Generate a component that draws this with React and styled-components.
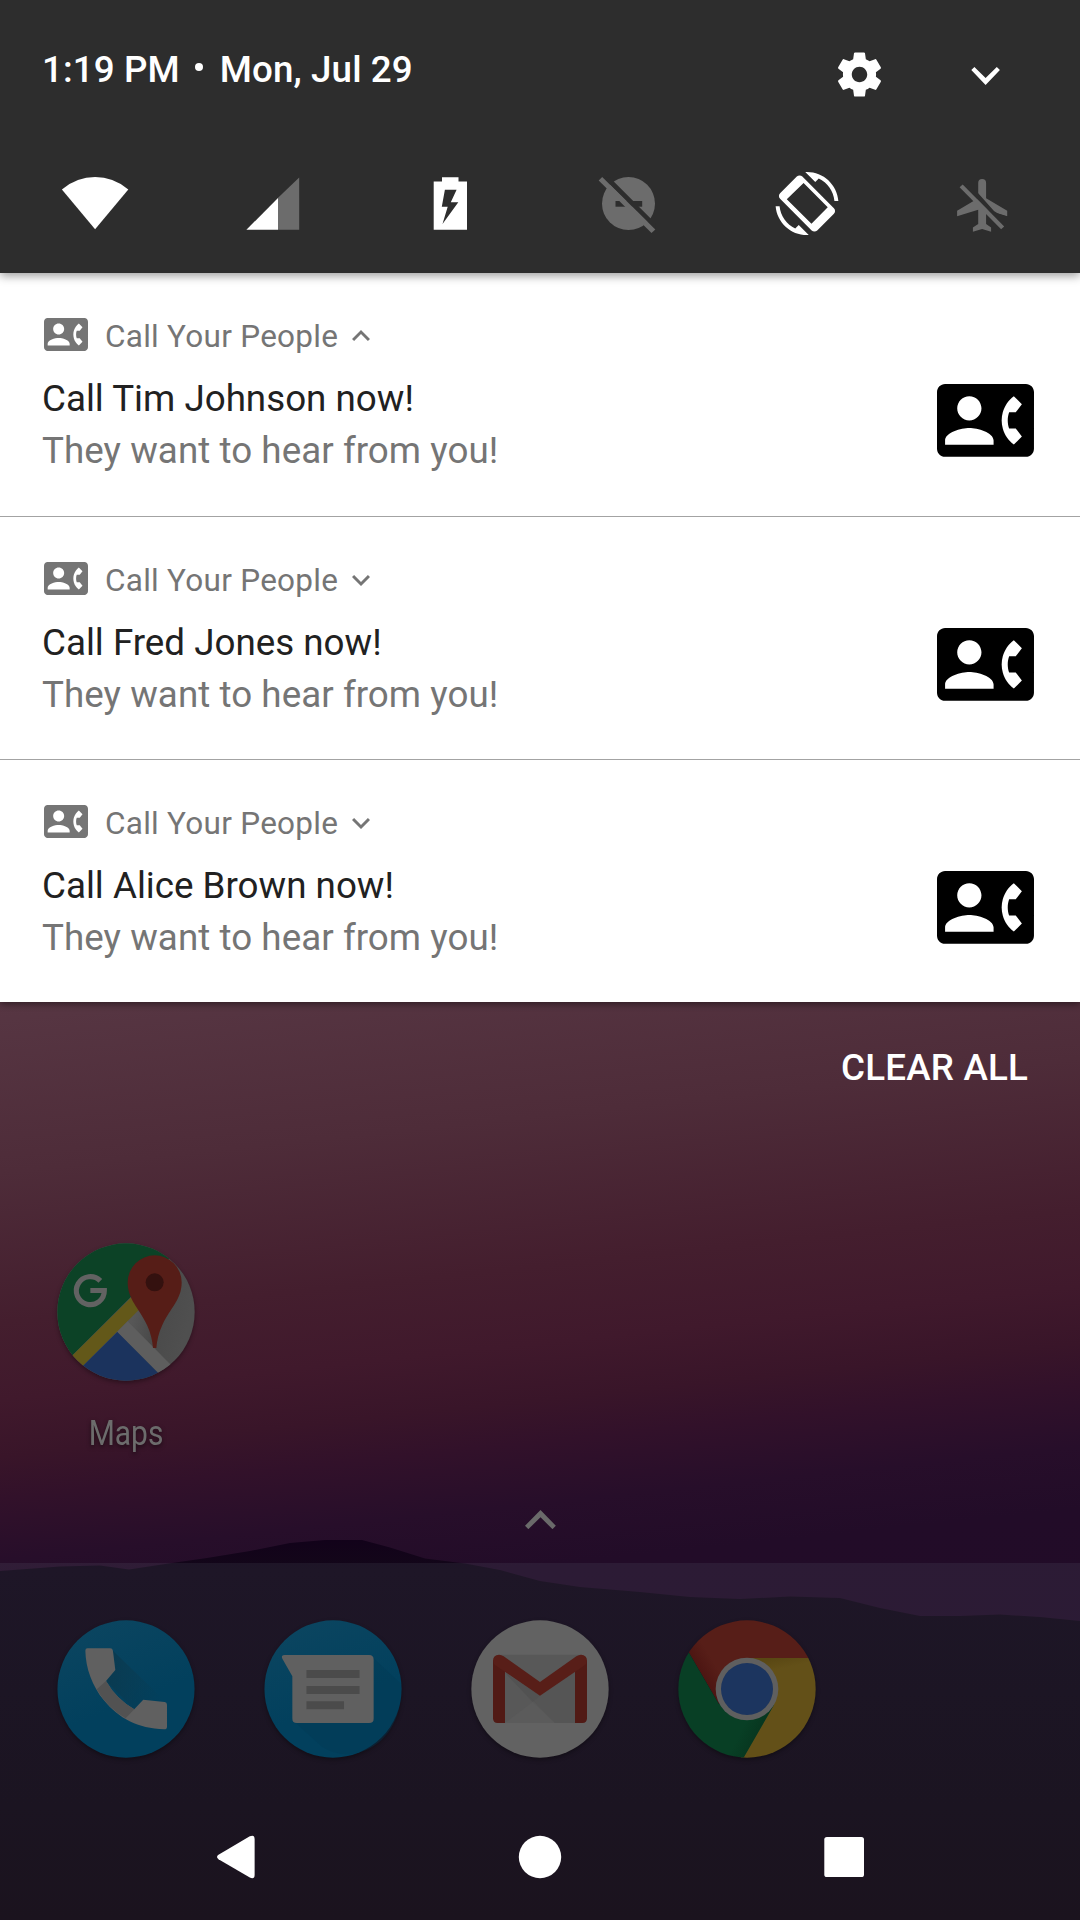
import React from "react";
import styled, { createGlobalStyle } from "styled-components";

const GlobalStyle = createGlobalStyle`
  *, *::before, *::after { box-sizing: border-box; }
  html, body { margin: 0; padding: 0; background: #1c1320; }
  svg { display: block; flex: none; }
`;

const Screen = styled.div`
  width: 1080px;
  height: 1920px;
  display: flex;
  flex-direction: column;
  overflow: hidden;
  font-family: Roboto, "Noto Sans", sans-serif;
`;

/* ---------- Status header ---------- */

const Header = styled.header`
  position: relative;
  z-index: 2;
  flex: none;
  height: 273px;
  display: flex;
  flex-direction: column;
  background: #2d2d2d;
  box-shadow: 0 3px 9px rgba(0, 0, 0, 0.38);
`;

const HeaderTop = styled.div`
  height: 132px;
  padding: 48px 80px 0 42px;
  display: flex;
  align-items: flex-start;
  justify-content: space-between;
`;

const Clock = styled.div`
  display: flex;
  align-items: flex-start;
  font-size: 36.75px;
  font-weight: 500;
  letter-spacing: 0.1px;
  line-height: 44px;
  color: #fff;
  white-space: pre;
`;

const Dot = styled.span`
  width: 8px;
  height: 8px;
  margin: 15px 16.5px 0 15.5px;
  border-radius: 50%;
  background: #fff;
`;

const HeaderActions = styled.div`
  display: flex;
  align-items: flex-start;
  gap: 85px;
`;

const QuickRow = styled.div`
  display: grid;
  grid-template-columns: repeat(6, 177.5px);
  justify-items: center;
  padding: 36px 0 0 6px;
`;

/* ---------- Notifications ---------- */

const Shade = styled.main`
  position: relative;
  z-index: 1;
  flex: none;
  height: 729px;
  background: #fff;
  box-shadow: 0 2px 7px rgba(0, 0, 0, 0.45);
`;

const Notification = styled.article`
  height: ${(p) => p.$height}px;
  padding: 45px 46px 0 42px;
  display: flex;
  justify-content: space-between;
  border-bottom: ${(p) => (p.$last ? "none" : "1px solid #a3a3a3")};
`;

const Body = styled.div`
  display: flex;
  flex-direction: column;
`;

const AppLine = styled.div`
  height: 37px;
  margin-bottom: 18px;
  padding-left: 1.5px;
  display: flex;
  align-items: flex-start;
`;

const AppName = styled.span`
  margin: 0 14px 0 17.5px;
  font-size: 31.5px;
  letter-spacing: 0.27px;
  line-height: 37px;
  color: #757575;
  white-space: nowrap;
`;

const Expander = styled.svg`
  margin-top: ${(p) => (p.$open ? 12 : 13)}px;
  transform: ${(p) => (p.$open ? "scaleY(-1)" : "none")};
`;

const Line = styled.div`
  font-size: 36.75px;
  letter-spacing: ${(p) => (p.$primary ? 0 : 0.05)}px;
  line-height: 52px;
  color: ${(p) => (p.$primary ? "#212121" : "#757575")};
  white-space: nowrap;
`;

const LargeIcon = styled.div`
  padding-top: 66px;
`;

/* ---------- Home screen ---------- */

const Home = styled.section`
  position: relative;
  flex: 1;
  display: flex;
  flex-direction: column;
  background: linear-gradient(
    174deg,
    #573643 0%,
    #4e2c39 16.5%,
    #441e2e 31%,
    #40192c 38.5%,
    #391529 44%,
    #32112a 48%,
    #270e2a 54%,
    #220c28 60%,
    #200c27 100%
  );
`;

const Hills = styled.svg`
  position: absolute;
  inset: 0;
`;

const ClearRow = styled.div`
  position: relative;
  height: 231px;
  padding: 44px 52px 0 0;
  display: flex;
  justify-content: flex-end;
`;

const ClearAll = styled.button`
  height: 44px;
  padding: 0;
  border: 0;
  background: none;
  font: 500 36.75px/44px Roboto, "Noto Sans", sans-serif;
  letter-spacing: 0.18px;
  color: #fff;
`;

const Workspace = styled.div`
  position: relative;
  height: 330px;
  display: flex;
  flex-direction: column;
  align-items: center;
`;

const Apps = styled.div`
  align-self: stretch;
  height: 277px;
  padding: 7px 0 0 54px;
  display: flex;
  gap: 63px;
`;

const AppShortcut = styled.div`
  width: 144px;
  display: flex;
  flex-direction: column;
  align-items: center;
`;

const Label = styled.span`
  margin-top: 27px;
  font-size: 34.5px;
  line-height: 44px;
  color: #6c6c6c;
  text-shadow: 0 2px 5px rgba(0, 0, 0, 0.5);
  transform: scaleX(0.868);
`;

const Bottom = styled.div`
  position: relative;
  flex: 1;
  display: flex;
  flex-direction: column;
  background: rgba(200, 245, 245, 0.065);
  border-bottom: 2px solid rgba(255, 255, 255, 0.06);
`;

const Dock = styled.div`
  height: 231px;
  padding: 54px 0 0 54px;
  display: flex;
  gap: 63px;
`;

const NavBar = styled.nav`
  height: 126px;
  padding: 0 214px;
  display: flex;
  align-items: center;
  justify-content: space-between;
`;

const AppIcon = styled.svg.attrs({ width: 144, height: 144, preserveAspectRatio: "none" })`
  filter: drop-shadow(0 2px 2px rgba(0, 0, 0, 0.35));
`;

/* ---------- Icons ---------- */

const ContactPhone = ({ width, color }) => (
  <svg width={width} height={width * 0.75} viewBox="0 3 24 18" fill={color}>
    <path d="M22 3H2C.9 3 0 3.9 0 5v14c0 1.1.9 2 2 2h20c1.1 0 1.99-.9 1.99-2L24 5c0-1.1-.9-2-2-2zM8 6c1.66 0 3 1.34 3 3s-1.34 3-3 3-3-1.34-3-3 1.34-3 3-3zm6 12H2v-1c0-2 4-3.1 6-3.1s6 1.1 6 3.1v1zm3.85-4h1.64L21 16l-1.99 1.99c-1.31-.98-2.28-2.38-2.73-3.99-.18-.64-.28-1.31-.28-2s.1-1.36.28-2c.45-1.62 1.42-3.01 2.73-3.99L21 8l-1.51 2h-1.64c-.22.63-.35 1.3-.35 2s.13 1.37.35 2z" />
  </svg>
);

const GearSvg = styled.svg`
  margin-top: -0.5px;
`;

const Gear = () => (
  <GearSvg width="53" height="53" viewBox="0 0 24 24" fill="#fff">
    <path d="M19.43 12.98c.04-.32.07-.64.07-.98s-.03-.66-.07-.98l2.11-1.65c.19-.15.24-.42.12-.64l-2-3.46c-.12-.22-.39-.3-.61-.22l-2.49 1c-.52-.4-1.08-.73-1.69-.98l-.38-2.65C14.46 2.18 14.25 2 14 2h-4c-.25 0-.46.18-.49.42l-.38 2.65c-.61.25-1.17.59-1.69.98l-2.49-1c-.23-.09-.49 0-.61.22l-2 3.46c-.13.22-.07.49.12.64l2.11 1.65c-.04.32-.07.65-.07.98s.03.66.07.98l-2.11 1.65c-.19.15-.24.42-.12.64l2 3.46c.12.22.39.3.61.22l2.49-1c.52.4 1.08.73 1.69.98l.38 2.65c.03.24.24.42.49.42h4c.25 0 .46-.18.49-.42l.38-2.65c.61-.25 1.17-.59 1.69-.98l2.49 1c.23.09.49 0 .61-.22l2-3.46c.12-.22.07-.49-.12-.64l-2.11-1.65zM12 15.5c-1.93 0-3.5-1.57-3.5-3.5s1.57-3.5 3.5-3.5 3.5 1.57 3.5 3.5-1.57 3.5-3.5 3.5z" />
  </GearSvg>
);

const HeaderChevronSvg = styled.svg`
  margin-top: 19px;
`;

const HeaderChevron = () => (
  <HeaderChevronSvg width="29" height="18" viewBox="970.5 67.3 29 18" fill="#fff">
    <path d="M970.8 70.4 973.9 67.3 985.1 78.3 996.3 67.3 999.4 70.4 985.1 85.2z" />
  </HeaderChevronSvg>
);

const quickIcons = [
  {
    id: "wifi",
    box: "59 168 72 72",
    art: <path fill="#fff" d="M95.1 229.3 61.9 189.4Q77 177.1 95.1 177.1T128.3 189.4z" />,
  },
  {
    id: "signal",
    box: "236.5 168 72 72",
    art: (
      <>
        <path fill="#6c6c6c" d="M278.3 198 299.7 177.4V229.8H278.3z" />
        <path fill="#fff" d="M246.9 229.8 278.5 197.9V229.8z" />
      </>
    ),
  },
  {
    id: "battery",
    box: "414 168 72 72",
    art: (
      <>
        <path fill="#fff" d="M442 177.2h16.5v4.2h8.5v48.4h-33.3v-48.4h8.3z" />
        <path fill="#2d2d2d" d="M444.9 189.7h11.7l-5.8 12.6h7.5L442.5 224l5.2-17.3h-5.9z" />
      </>
    ),
  },
  {
    id: "dnd",
    box: "591.5 168 72 72",
    art: (
      <>
        <circle cx="629" cy="203.6" r="26.5" fill="#6c6c6c" />
        <path fill="#2d2d2d" d="M616 201h26.7v5.7H616z" />
        <path fill="#2d2d2d" d="M602.7 177 610 177.3 655.7 223 655.7 229.6z" />
        <path fill="#6c6c6c" d="M599.2 180.4 602.7 177 655.8 229.4 652 233z" />
      </>
    ),
  },
  {
    id: "rotation",
    box: "768.5 168 72 72",
    art: (
      <g transform="translate(775 172) scale(2.625)" fill="#fff">
        <path d="M16.48 2.52c3.27 1.55 5.61 4.72 5.97 8.48h1.5C23.44 4.84 18.29 0 12 0l-.66.03 3.81 3.81 1.33-1.32z" />
        <path d="M7.52 21.48C4.25 19.94 1.91 16.76 1.55 13H.05C.56 19.16 5.71 24 12 24l.66-.03-3.81-3.81-1.33 1.32z" />
        <path
          fillRule="evenodd"
          d="M10.23 1.75c-.59-.59-1.54-.59-2.12 0L1.75 8.11c-.59.59-.59 1.54 0 2.12l12.02 12.02c.59.59 1.54.59 2.12 0l6.36-6.36c.59-.59.59-1.54 0-2.12L10.23 1.75zM10.7 4.2 19.9 13.4 13.7 19.7 4.3 10.4z"
        />
      </g>
    ),
  },
  {
    id: "airplane",
    box: "946.5 168 72 72",
    art: (
      <>
        <path
          fill="#6c6c6c"
          d="M978.7 183a3.95 3.95 0 0 1 7.9 0V198.2L1007.7 210.8V216.2L986.6 209.8V224L991.6 227.6V231.8L982.6 229 973.4 231.8V227.6L978.7 224V209.8L957.6 216.2V210.8L978.7 198.2z"
        />
        <path
          fill="#2d2d2d"
          d="M963.2 184.7 970 184.7 978.7 193.3 994.5 211 998.3 213.4 1009 217 1010 232z"
        />
        <path fill="#6c6c6c" d="M960.1 187.3 963.2 184.4 1004.7 226.4 1001.6 229.3z" />
      </>
    ),
  },
];

const Chevron = ({ open }) => (
  <Expander $open={open} width="18" height="11" viewBox="0 0 18 11" fill="#757575">
    <path d="M0 2.1 2.1 0 9 6.9 15.9 0 18 2.1 9 11z" />
  </Expander>
);

const MapsIcon = () => (
  <AppIcon viewBox="163 120 432 432">
    <defs>
      <clipPath id="maps-disc">
        <circle cx="379" cy="336" r="206" />
      </clipPath>
      <linearGradient id="maps-grey" gradientUnits="userSpaceOnUse" x1="400" y1="350" x2="560" y2="390">
        <stop offset="0" stopColor="#575757" />
        <stop offset="0.4" stopColor="#4a4a4a" />
        <stop offset="1" stopColor="#4f4f4f" />
      </linearGradient>
    </defs>
    <g clipPath="url(#maps-disc)">
      <path fill="url(#maps-grey)" d="M163 120h432v432H163z" />
      <path fill="#0c4226" d="M150 100H590L560 125 219 466 150 540z" />
      <path fill="#635819" d="M219 466 400 287 430 317 250 497 200 548 169 517z" />
      <path fill="#1b335d" d="M353 395 474 517 500 580H167z" />
      <path fill="#5e5e5e" d="M353 395 384 364 540 521 500 543z" />
    </g>
    <path
      fill="#561d17"
      d="M465 166a81 81 0 0 1 81 81c0 52-33 76-58 128-11 24-16 45-18 69h-10c-2-24-7-45-18-69-25-52-58-76-58-128a81 81 0 0 1 81-81z"
    />
    <circle cx="465" cy="247" r="27" fill="#34110f" />
    <path
      fill="none"
      stroke="#626262"
      strokeWidth="15.5"
      d="M302 242.500A42 42 0 1 0 314 271.500H272"
    />
  </AppIcon>
);

const PhoneIcon = () => (
  <AppIcon viewBox="157 411 418 432">
    <defs>
      <linearGradient id="phone-disc" x1="0" y1="0" x2="0.4" y2="1">
        <stop offset="0.1" stopColor="#0b4560" />
        <stop offset="0.7" stopColor="#02405d" />
      </linearGradient>
      <linearGradient id="phone-cast" x1="0" y1="0.3" x2="1" y2="0.5">
        <stop offset="0" stopColor="#0a3a50" />
        <stop offset="1" stopColor="#0a3a50" stopOpacity="0" />
      </linearGradient>
    </defs>
    <ellipse cx="366" cy="627" rx="199" ry="206" fill="url(#phone-disc)" />
    <path fill="url(#phone-cast)" d="M328 512 480 663 416 659 390 688 308 603 335 570z" />
    <path
      fill="#606060"
      d="M254 505H320Q327 505 328 512L335 570 308 603Q338 657 390 688L416 659 478 666Q485 667 485 674V740Q485 748 477 748C400 746 345 715 302 661C268 618 249 565 248 512Q248 505 254 505z"
    />
    <path fill="#525252" d="M281 628 308 603Q338 657 390 688L365 715Q312 684 281 628z" />
  </AppIcon>
);

const MessagesIcon = () => (
  <AppIcon viewBox="758 411 418 432">
    <ellipse cx="967" cy="627" rx="199" ry="206" fill="url(#phone-disc)" />
    <path
      fill="#033a55"
      opacity=".4"
      d="M1085 535 1163 610C1172 700 1130 790 1050 815Q990 836 935 800L855 725 1080 720z"
    />
    <path
      fill="#606060"
      d="M820 536Q815 525 827 525H1072Q1085 525 1085 539V716Q1085 729 1072 729H862Q849 729 849 716V589z"
    />
    <path fill="#4b4b4b" d="M890 570h154v24H890zM890 618h154v24H890zM890 664h109v24H890z" />
  </AppIcon>
);

const GmailIcon = () => (
  <AppIcon viewBox="24 381 432 432">
    <circle cx="240" cy="597" r="206" fill="#626262" />
    <path fill="#585858" d="M115 494H365V699H115z" />
    <path fill="#5b5b5b" d="M135 699 218 636 285 699z" />
    <path fill="#525252" d="M135 548 240 617 218 636z" />
    <path fill="#525252" opacity=".5" d="M135 548 240 617 345 545V699H285z" />
    <path fill="#511a15" d="M99 510 135 540V699H113Q99 699 99 685z" />
    <path fill="#511a15" d="M381 510 345 540V699H367Q381 699 381 685z" />
    <path
      fill="#581e18"
      d="M117 494Q124 494 131 499L240 576 349 499Q356 494 363 494 381 495 381 512 381 521 372 527L240 617 108 527Q99 521 99 512 99 495 117 494z"
    />
  </AppIcon>
);

const ChromeIcon = () => (
  <AppIcon viewBox="106 81 432 432">
    <defs>
      <clipPath id="chrome-disc">
        <circle cx="322" cy="297" r="206" />
      </clipPath>
      <linearGradient id="chrome-red" gradientUnits="userSpaceOnUse" x1="190" y1="265" x2="235" y2="238">
        <stop offset="0" stopColor="#4c1512" />
        <stop offset="1" stopColor="#571e18" />
      </linearGradient>
      <linearGradient id="chrome-yellow" gradientUnits="userSpaceOnUse" x1="400" y1="204" x2="408" y2="240">
        <stop offset="0" stopColor="#594713" />
        <stop offset="1" stopColor="#635018" />
      </linearGradient>
      <linearGradient id="chrome-green" gradientUnits="userSpaceOnUse" x1="310" y1="410" x2="360" y2="435">
        <stop offset="0" stopColor="#083f25" />
        <stop offset="1" stopColor="#07361f" />
      </linearGradient>
    </defs>
    <g clipPath="url(#chrome-disc)">
      <path fill="url(#chrome-yellow)" d="M322 204H540V520H302L322 297z" />
      <path fill="url(#chrome-red)" d="M148 188 90 80H560V204H322V297L238 343z" />
      <path fill="url(#chrome-green)" d="M148 188 238 343 322 297 403 345 308 510H100V105z" />
    </g>
    <circle cx="322" cy="297" r="94" fill="#5f5f5f" />
    <circle cx="322" cy="297" r="78" fill="#1c355f" />
  </AppIcon>
);

const AllAppsCaret = () => (
  <svg width="31" height="19" viewBox="194.500 62 93 57" fill="#6a6a6a">
    <path d="M194.500 109 241 62 287 109 277 119.500 241 84 204.500 119.500z" />
  </svg>
);

const BackIcon = () => (
  <svg width="44" height="44" viewBox="214 1835 44 44" fill="#fff">
    <path d="M218.500 1854.800 249.800 1836.300Q254.600 1834.200 254.600 1839V1875Q254.600 1879.600 249.800 1877.600L218.500 1859.200Q215.500 1857 218.500 1854.800z" />
  </svg>
);

const HomeIcon = () => (
  <svg width="44" height="44" viewBox="0 0 44 44" fill="#fff">
    <circle cx="22" cy="22" r="21.200" />
  </svg>
);

const RecentsIcon = () => (
  <svg width="44" height="44" viewBox="0 0 44 44" fill="#fff">
    <rect x="2.300" y="2" width="39.700" height="40" rx="2.600" />
  </svg>
);

const notifications = [
  { name: "Tim Johnson", height: 244, open: true },
  { name: "Fred Jones", height: 243 },
  { name: "Alice Brown", height: 242, last: true },
];

export default function App() {
  return (
    <Screen>
      <GlobalStyle />
      <Header>
        <HeaderTop>
          <Clock>
            <span>1:19 PM</span>
            <Dot />
            <span>Mon, Jul 29</span>
          </Clock>
          <HeaderActions>
            <Gear />
            <HeaderChevron />
          </HeaderActions>
        </HeaderTop>
        <QuickRow>
          {quickIcons.map((icon) => (
            <svg key={icon.id} width="72" height="72" viewBox={icon.box}>
              {icon.art}
            </svg>
          ))}
        </QuickRow>
      </Header>

      <Shade>
        {notifications.map((n) => (
          <Notification key={n.name} $height={n.height} $last={n.last}>
            <Body>
              <AppLine>
                <ContactPhone width={44} color="#757575" />
                <AppName>Call Your People</AppName>
                <Chevron open={n.open} />
              </AppLine>
              <Line $primary>Call {n.name} now!</Line>
              <Line>They want to hear from you!</Line>
            </Body>
            <LargeIcon>
              <ContactPhone width={97} color="#000" />
            </LargeIcon>
          </Notification>
        ))}
      </Shade>

      <Home>
        <Hills width="1080" height="918" viewBox="0 1002 1080 918">
          <defs>
            <linearGradient id="hill" x1="0" y1="0" x2="0" y2="1">
              <stop offset="0" stopColor="#12021a" />
              <stop offset="0.08" stopColor="#130719" />
              <stop offset="0.4" stopColor="#110616" />
              <stop offset="1" stopColor="#0f0410" />
            </linearGradient>
          </defs>
          <path
            fill="url(#hill)"
            d="M0 1571 60 1566.500 100 1565.500 129 1569.500 172 1563 207 1558 250 1551 290 1543 325 1540 362 1540 390 1547.500 425 1558.500 465 1563.500 500 1570 540 1581 580 1587 640 1592 690 1597 740 1599 790 1596.500 840 1598 880 1608 920 1616 960 1616 1000 1614.500 1040 1617 1080 1621V1920H0z"
          />
        </Hills>
        <ClearRow>
          <ClearAll>CLEAR ALL</ClearAll>
        </ClearRow>
        <Workspace>
          <Apps>
            <AppShortcut>
              <MapsIcon />
              <Label>Maps</Label>
            </AppShortcut>
          </Apps>
          <AllAppsCaret />
        </Workspace>
        <Bottom>
          <Dock>
            <PhoneIcon />
            <MessagesIcon />
            <GmailIcon />
            <ChromeIcon />
          </Dock>
          <NavBar>
            <BackIcon />
            <HomeIcon />
            <RecentsIcon />
          </NavBar>
        </Bottom>
      </Home>
    </Screen>
  );
}
